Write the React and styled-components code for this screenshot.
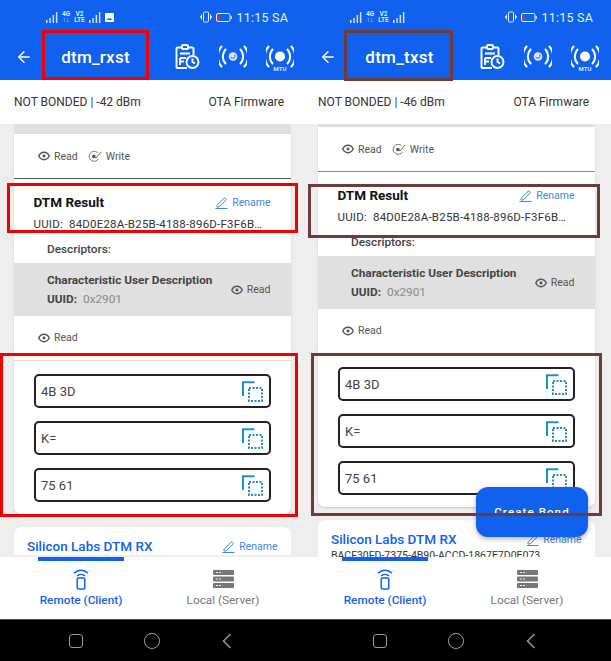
import styled, { createGlobalStyle } from "styled-components"
import { ArrowLeft } from "lucide-react"

const BLUE = "#1062ee"

const GlobalStyle = createGlobalStyle`
  html, body {
    margin: 0;
    padding: 0;
    background: #fff;
  }
  * {
    box-sizing: border-box;
  }
  body {
    font-family: Roboto, "Liberation Sans", sans-serif;
  }
`

// Icons
const Bars = () => (
  <svg width="12" height="11" viewBox="0 0 12 11" fill="#cfe0ff">
    <rect x="0" y="8" width="1.5" height="3" />
    <rect x="3.3" y="6" width="1.5" height="5" />
    <rect x="6.6" y="3" width="1.5" height="8" />
    <rect x="9.9" y="0" width="1.5" height="11" />
  </svg>
)

const Picture = () => (
  <svg width="9" height="9" viewBox="0 0 9 9">
    <rect width="9" height="9" rx="1" fill="#fff" />
    <path d="M1.5 7l2-2 1 1 1-1 2 2z" fill={BLUE} />
  </svg>
)

const Vibrate = () => (
  <svg width="12" height="12" viewBox="0 0 12 12" fill="none" stroke="#e2ebff" strokeWidth="1">
    <rect x="3.5" y="1" width="5" height="10" rx="1" />
    <path d="M1.5 3.5v5M10.5 3.5v5M0.3 5v2M11.7 5v2" />
  </svg>
)

const Battery = () => (
  <svg width="16" height="9" viewBox="0 0 16 9" fill="none">
    <rect x="0.5" y="0.5" width="13.5" height="8" rx="1.5" stroke="#e6eeff" />
    <rect x="1.5" y="1.5" width="2" height="6" fill="#e0323c" />
    <rect x="14.6" y="3" width="1.2" height="3" fill="#e6eeff" />
  </svg>
)

const ScheduleIcon = () => (
  <svg width="25" height="26" viewBox="0 0 25 26" fill="none" stroke="#fff" strokeWidth="1.9">
    <path d="M12 24H2.5a1 1 0 0 1-1-1V4.5a1 1 0 0 1 1-1h15a1 1 0 0 1 1 1V11" />
    <rect x="7" y="1" width="6" height="4" rx="1" fill={BLUE} />
    <path d="M5 9.5h10M5 14v7M5 14h6M5 17.5h4" />
    <circle cx="17.5" cy="18" r="6" fill={BLUE} />
    <path d="M17.5 14.5V18l2.5 1.5" />
  </svg>
)

const Waves = ({ children }) => (
  <svg width="28" height="26" viewBox="0 0 28 26" fill="none" stroke="#fff" strokeWidth="2" strokeLinecap="round">
    <path d="M6.5 5.5a10.5 10.5 0 0 0 0 14M21.5 5.5a10.5 10.5 0 0 1 0 14" />
    <path d="M2.5 2.5a15.5 15.5 0 0 0 0 20M25.5 2.5a15.5 15.5 0 0 1 0 20" />
    {children}
  </svg>
)

const PhyIcon = () => (
  <Waves>
    <circle cx="14" cy="12.5" r="4.3" fill="#dbe7ff" stroke="none" />
    <path d="M12 13.5a2.4 2.4 0 0 0 4-2.5" stroke={BLUE} strokeWidth="1" />
  </Waves>
)

const MtuIcon = () => (
  <MtuWrap>
    <Waves>
      <circle cx="14" cy="12.5" r="5" fill="#fff" stroke="none" />
    </Waves>
    <MtuLabel>MTU</MtuLabel>
  </MtuWrap>
)

const EyeIcon = () => (
  <svg width="12" height="10" viewBox="0 0 13 10" fill="none" stroke="#555" strokeWidth="1.6">
    <path d="M0.8 5C2.2 2.3 4.2 1 6.5 1s4.3 1.3 5.7 4c-1.4 2.7-3.4 4-5.7 4S2.2 7.7 0.8 5z" />
    <circle cx="6.5" cy="5" r="1.6" fill="#555" stroke="none" />
  </svg>
)

const WriteIcon = () => (
  <svg width="14" height="11" viewBox="0 0 14 11" fill="none" stroke="#777" strokeWidth="1">
    <path d="M10.5 7.8A5 5 0 1 1 9.5 1.6" />
    <circle cx="5.8" cy="5.5" r="1.8" fill="#555" stroke="none" />
    <path d="M6 5.5l2 1.6L13 1" stroke="#666" />
  </svg>
)

const PencilIcon = () => (
  <svg width="13" height="13" viewBox="0 0 13 13" fill="none" stroke="#3f87dc" strokeWidth="1">
    <path d="M2 9.5L9 2.2a1 1 0 0 1 1.4 0l.6.6a1 1 0 0 1 0 1.4L4 11H2z" />
    <path d="M0.5 12.5h12" />
  </svg>
)

const CopyIcon = () => (
  <svg width="21" height="21" viewBox="0 0 21 21" fill="none" stroke="#1c8ecf">
    <path d="M1 15V1.2h11.5" strokeWidth="2" />
    <rect x="7" y="7" width="13" height="13" strokeWidth="2" strokeDasharray="2 1.5" />
  </svg>
)

const RemoteIcon = () => (
  <svg width="20" height="21" viewBox="0 0 20 21" fill="none" stroke={BLUE}>
    <path d="M3 4.2a10 10 0 0 1 14 0" strokeWidth="1.5" />
    <path d="M6 7a6 6 0 0 1 8 0" strokeWidth="1.5" />
    <rect x="6.2" y="9" width="7.6" height="11" rx="1.2" strokeWidth="1.5" />
  </svg>
)

const ServerIcon = () => (
  <svg width="21" height="19" viewBox="0 0 21 19" fill="#777">
    <rect width="21" height="5" rx="1" />
    <rect y="6.5" width="21" height="5" rx="1" />
    <rect y="13" width="21" height="5" rx="1" />
    <path d="M3 2h2v1H3zM6 2h2v1H6zM3 8.5h2v1H3zM6 8.5h2v1H6zM3 15h2v1H3zM6 15h2v1H6z" fill="#eee" />
  </svg>
)

// Page
const Page = styled.div`
  display: flex;
  width: 611px;
  height: 661px;
  overflow: hidden;
`

const Phone = styled.div`
  position: relative;
  display: flex;
  flex-direction: column;
  width: ${(p) => p.$width}px;
  height: 661px;
  flex-shrink: 0;
  background: #fff;
`

const StatusBar = styled.div`
  display: flex;
  align-items: center;
  justify-content: space-between;
  height: 33px;
  padding: 1px ${(p) => p.$right}px 0 46px;
  background: ${BLUE};
`

const StatusGroup = styled.div`
  display: flex;
  align-items: center;
  gap: 4px;
`

const NetBadge = styled.span`
  display: flex;
  flex-direction: column;
  align-items: center;
  color: #dce7ff;
  font-size: 6.5px;
  font-weight: 700;
  line-height: 6px;
`

const Clock = styled.span`
  margin-left: 1px;
  color: #e8efff;
  font-size: 12.5px;
  letter-spacing: 0.2px;
`

const AppBar = styled.header`
  display: flex;
  align-items: center;
  height: 47px;
  padding: 0 ${(p) => p.$right}px 0 15px;
  color: #fff;
  background: ${BLUE};
`

const Title = styled.h1`
  width: 107px;
  margin: 0 0 0 9px;
  color: #fff;
  font-size: 17px;
  font-weight: 500;
  letter-spacing: 0.25px;
  text-align: center;
`

const AppActions = styled.div`
  display: flex;
  align-items: center;
  gap: 19px;
  margin-left: auto;
`

const MtuWrap = styled.div`
  position: relative;
  display: flex;
`

const MtuLabel = styled.span`
  position: absolute;
  left: 0;
  right: 0;
  bottom: -2px;
  width: 16px;
  margin: 0 auto;
  color: #dbe7ff;
  background: ${BLUE};
  font-size: 6px;
  font-weight: 700;
  line-height: 7px;
  text-align: center;
`

const InfoRow = styled.div`
  display: flex;
  align-items: center;
  justify-content: space-between;
  height: 44px;
  padding: 0 ${(p) => p.$right}px 0 14px;
  color: #333;
  font-size: 12px;
`

const Content = styled.main`
  flex: 1;
  min-height: 0;
  overflow: hidden;
  padding: 0 ${(p) => p.$right}px 0 13.5px;
  background: #eeeeee;
`

const Strip = styled.div`
  height: ${(p) => p.$height}px;
  background: #e0e0e0;
`

const Card = styled.section`
  background: #fff;
  border-radius: 0 0 7px 7px;
  box-shadow: 0 1px 2px rgba(0, 0, 0, 0.15);
`

const Props = styled.div`
  display: flex;
  align-items: center;
  height: ${(p) => p.$height}px;
  padding-left: 24.5px;
  border-bottom: 1px solid ${(p) => p.$line || "transparent"};
`

const Prop = styled.span`
  display: inline-flex;
  align-items: center;
  gap: 4px;
  margin-right: ${(p) => (p.$flush ? 0 : 10)}px;
  color: #555;
  font-size: 10.5px;
`

const CharHead = styled.div`
  padding: 15px 20px 6px;
`

const NameRow = styled.div`
  display: flex;
  align-items: center;
  justify-content: space-between;
  height: 16px;
`

const CharName = styled.h2`
  margin: 0;
  color: #111;
  font-size: 13.5px;
  font-weight: 700;
`

const Rename = styled.span`
  display: inline-flex;
  align-items: center;
  gap: 4px;
  color: #3f87dc;
  font-size: 10.5px;
`

const UuidRow = styled.div`
  margin-top: 6px;
  color: #333;
  font-size: 11.5px;
  line-height: 16px;
  letter-spacing: 0.2px;
  white-space: pre;
`

const DescLabel = styled.div`
  margin: 9px 0 0 13.5px;
  color: #444;
  font-size: 11.8px;
  font-weight: 500;
  line-height: 16px;
`

const DescBand = styled.div`
  display: flex;
  align-items: center;
  justify-content: space-between;
  height: 53px;
  padding: 0 20px 0 33.5px;
  background: #e0e0e0;
`

const DescName = styled.div`
  color: #444;
  font-size: 11.8px;
  font-weight: 700;
  line-height: 18px;
`

const DescUuid = styled.div`
  color: #444;
  font-size: 11.8px;
  font-weight: 700;
  line-height: 20px;

  span {
    margin-left: 6px;
    color: #888;
    font-weight: 400;
  }
`

const Values = styled.div`
  display: flex;
  flex-direction: column;
  gap: 13px;
  padding: 13px 20px 12px;
  border-top: 1px solid #ddd;
`

const ValueBox = styled.div`
  display: flex;
  align-items: center;
  justify-content: space-between;
  height: 34px;
  padding: 0 5.5px;
  color: #444;
  font-size: 13px;
  border: 2px solid #222;
  border-radius: 5px;
`

const NextCard = styled.section`
  margin-top: 13px;
  padding: 10px 13px 0 13.5px;
  background: #fff;
  border-radius: 8px 8px 0 0;
`

const ServiceRow = styled.div`
  display: flex;
  align-items: center;
  justify-content: space-between;
`

const ServiceName = styled.h3`
  margin: 0;
  color: ${BLUE};
  font-size: 13.5px;
  font-weight: 500;
  line-height: 18px;
`

const ServiceUuid = styled.div`
  margin-top: 1px;
  color: #333;
  font-size: 10.5px;
  line-height: 14px;
  white-space: nowrap;
`

const TabBar = styled.nav`
  display: grid;
  grid-template-columns: 142px 142px;
  height: 62px;
  padding-left: 10px;
  background: #fff;
`

const Tab = styled.div`
  display: flex;
  flex-direction: column;
  align-items: center;
  color: ${(p) => (p.$active ? BLUE : "#777")};
  font-size: 11.8px;
  font-weight: ${(p) => (p.$active ? 500 : 400)};
`

const TabMark = styled.div`
  width: 86px;
  height: 4px;
  background: ${(p) => (p.$active ? BLUE : "transparent")};
`

const TabIcon = styled.div`
  display: flex;
  align-items: center;
  justify-content: center;
  height: 23px;
  margin: 7px 0 2px;
`

const NavBar = styled.div`
  display: flex;
  align-items: center;
  height: 42px;
  padding-left: 69px;
  background: #000;
  border-top: 1px solid #555;
`

const NavSquare = styled.div`
  width: 14px;
  height: 14px;
  border: 1.5px solid #9a9a9a;
  border-radius: 3px;
`

const NavCircle = styled.div`
  width: 16px;
  height: 16px;
  margin-left: 61px;
  border: 1.5px solid #9a9a9a;
  border-radius: 50%;
`

const NavBack = styled.svg`
  margin-left: 62px;
`

const Fab = styled.button`
  position: absolute;
  left: 172px;
  top: 487px;
  width: 112px;
  height: 50px;
  padding: 0 0 1px;
  border: 0;
  border-radius: 12px;
  color: #fff;
  background: ${BLUE};
  font-family: inherit;
  font-size: 11.5px;
  font-weight: 500;
  letter-spacing: 1.1px;
  box-shadow: 0 2px 5px rgba(0, 0, 0, 0.3);
`

// Annotation rectangles drawn over the screenshots
const Mark = styled.div`
  position: absolute;
  left: ${(p) => p.$x}px;
  top: ${(p) => p.$y}px;
  width: ${(p) => p.$w}px;
  height: ${(p) => p.$h}px;
  border: 3px solid ${(p) => p.$color};
  pointer-events: none;
`

const phones = [
  {
    width: 304,
    right: 14,
    title: "dtm_rxst",
    rssi: "-42",
    strip: 10,
    color: "#f00000",
    picture: true,
    line: "#555",
    fab: false,
    marks: [
      [42, 30, 107, 50],
      [7, 183, 291, 50],
      [0, 353, 298, 164],
    ],
  },
  {
    width: 307,
    right: 16,
    title: "dtm_txst",
    rssi: "-46",
    strip: 3,
    color: "#6e3a3a",
    picture: false,
    line: "#888",
    fab: true,
    marks: [
      [40, 30, 109, 51],
      [4, 184, 292, 54],
      [7, 353, 291, 163],
    ],
  },
]

const ValueRow = ({ value }) => (
  <ValueBox>
    {value}
    <CopyIcon />
  </ValueBox>
)

const RenameLink = () => (
  <Rename>
    <PencilIcon />
    Rename
  </Rename>
)

const PhoneView = ({ data }) => (
  <Phone $width={data.width}>
    <StatusBar $right={data.right + 2}>
      <StatusGroup>
        <Bars />
        <NetBadge>
          4G
          <span>↑↓</span>
        </NetBadge>
        <NetBadge>
          V2
          <span>LTE</span>
        </NetBadge>
        <Bars />
        {data.picture && <Picture />}
      </StatusGroup>
      <StatusGroup>
        <Vibrate />
        <Battery />
        <Clock>11:15 SA</Clock>
      </StatusGroup>
    </StatusBar>

    <AppBar $right={data.right - 4}>
      <ArrowLeft size={18} strokeWidth={1.8} />
      <Title>{data.title}</Title>
      <AppActions>
        <ScheduleIcon />
        <PhyIcon />
        <MtuIcon />
      </AppActions>
    </AppBar>

    <InfoRow $right={data.right + 6}>
      <span>NOT BONDED | {data.rssi} dBm</span>
      <span>OTA Firmware</span>
    </InfoRow>

    <Content $right={data.width - 290.5}>
      <Strip $height={data.strip} />
      <Card>
        <Props $height={45} $line={data.line}>
          <Prop>
            <EyeIcon />
            Read
          </Prop>
          <Prop>
            <WriteIcon />
            Write
          </Prop>
        </Props>
        <CharHead>
          <NameRow>
            <CharName>DTM Result</CharName>
            <RenameLink />
          </NameRow>
          <UuidRow>UUID:  84D0E28A-B25B-4188-896D-F3F6B…</UuidRow>
          <DescLabel>Descriptors:</DescLabel>
        </CharHead>
        <DescBand>
          <div>
            <DescName>Characteristic User Description</DescName>
            <DescUuid>
              UUID:<span>0x2901</span>
            </DescUuid>
          </div>
          <Prop $flush>
            <EyeIcon />
            Read
          </Prop>
        </DescBand>
        <Props $height={44}>
          <Prop>
            <EyeIcon />
            Read
          </Prop>
        </Props>
        <Values>
          <ValueRow value="4B 3D" />
          <ValueRow value="K=" />
          <ValueRow value="75 61" />
        </Values>
      </Card>
      <NextCard>
        <ServiceRow>
          <ServiceName>Silicon Labs DTM RX</ServiceName>
          <RenameLink />
        </ServiceRow>
        {data.fab && <ServiceUuid>BACF30FD-7375-4B90-ACCD-1867E7D0E073</ServiceUuid>}
      </NextCard>
    </Content>

    <TabBar>
      <Tab $active>
        <TabMark $active />
        <TabIcon>
          <RemoteIcon />
        </TabIcon>
        Remote (Client)
      </Tab>
      <Tab>
        <TabMark />
        <TabIcon>
          <ServerIcon />
        </TabIcon>
        Local (Server)
      </Tab>
    </TabBar>

    <NavBar>
      <NavSquare />
      <NavCircle />
      <NavBack width="10" height="16" viewBox="0 0 10 16" fill="none" stroke="#9a9a9a" strokeWidth="1.5">
        <path d="M8.5 1L1.5 8l7 7" />
      </NavBack>
    </NavBar>

    {data.fab && <Fab>Create Bond</Fab>}
    {data.marks.map(([x, y, w, h]) => (
      <Mark key={`${x}-${y}`} $x={x} $y={y} $w={w} $h={h} $color={data.color} />
    ))}
  </Phone>
)

export default function App() {
  return (
    <>
      <GlobalStyle />
      <Page>
        {phones.map((data) => (
          <PhoneView key={data.title} data={data} />
        ))}
      </Page>
    </>
  )
}
